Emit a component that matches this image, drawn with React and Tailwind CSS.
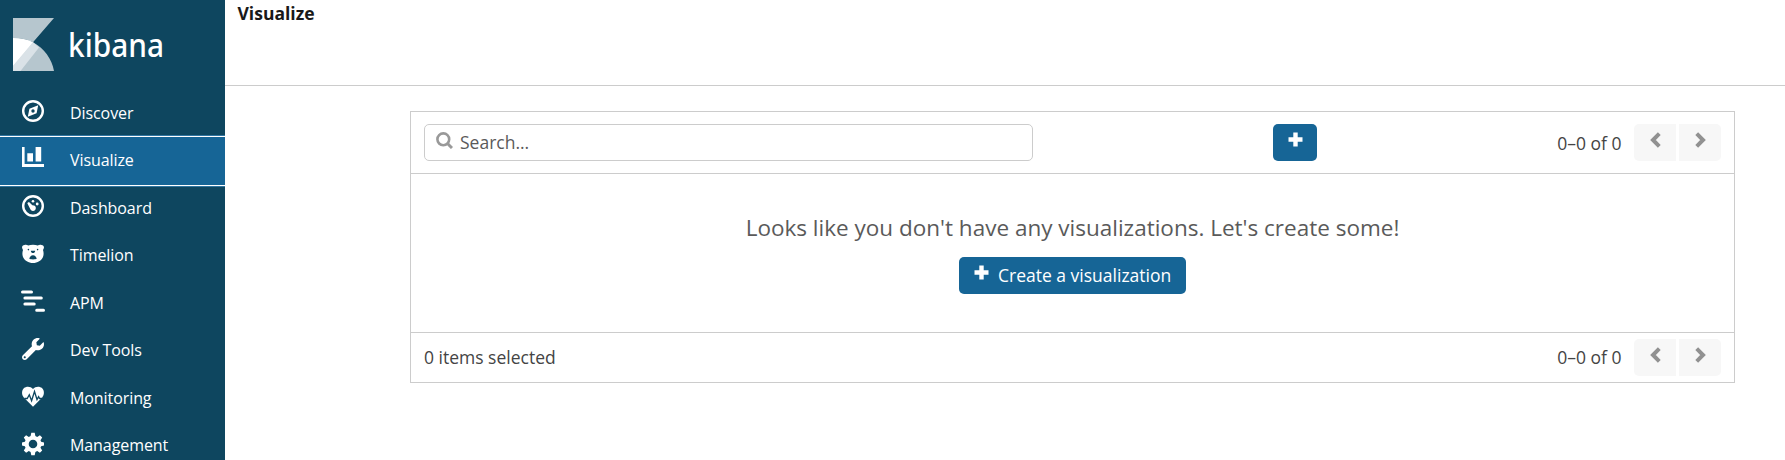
import React from 'react';
import { FaWrench } from 'react-icons/fa';

const DARK = '#0e465f';

function KibanaMark() {
  return (
    <svg className="block h-[53px] w-[41px]" viewBox="0 0 41 53">
      <path d="M0 0H41L20 24.2C14 21 7 20 0 20Z" fill="#b6c6ce" />
      <path d="M20 24.2C31 30 39 41 41 53H0V20C7 20 14 21 20 24.2Z" fill="#b6c6ce" />
      <path d="M20 24.2L26 29.6L7.5 53H0V48Z" fill="#dae2e7" />
      <path d="M0 20C7 20 14 21 20 24.2L0 48Z" fill="#fff" />
    </svg>
  );
}

function Icon({ children }) {
  return (
    <svg className="block h-6 w-6 shrink-0" viewBox="0 0 24 24" fill="#fff">
      {children}
    </svg>
  );
}

function DiscoverIcon() {
  return (
    <Icon>
      <circle cx="12" cy="12" r="9.8" fill="none" stroke="#fff" strokeWidth="2.4" />
      <path fillRule="evenodd" d="M17.2 6.3L15.6 14.2L6.8 17.7L8.4 9.8ZM12 10.3A1.7 1.7 0 1 0 12 13.7A1.7 1.7 0 1 0 12 10.3Z" />
    </Icon>
  );
}

function VisualizeIcon() {
  return (
    <Icon>
      <path d="M1 1H3.6V18H23V21H1ZM6.3 7.2H12V15.6H6.3ZM14.6 1H20.2V15.6H14.6Z" />
    </Icon>
  );
}

function DashboardIcon() {
  return (
    <Icon>
      <circle cx="12" cy="12" r="9.8" fill="none" stroke="#fff" strokeWidth="2.4" />
      <circle cx="12" cy="7.2" r="1.3" />
      <circle cx="16.2" cy="10" r="1.4" />
      <path d="M6.4 9.6C6.6 8.4 7.8 8 8.8 8.7L11.3 11.2C12.8 11 14.6 11.7 14.8 13.6C15 15.6 13.8 17 12 17C10.5 17 9.6 15.8 9 14.5Z" />
    </Icon>
  );
}

function TimelionIcon() {
  return (
    <Icon>
      <path d="M3.5 3C5 2.5 6.3 3 7.2 3.6C10 2.3 14 2.3 16.8 3.6C17.7 3 19 2.5 20.5 3C22.5 3 23.3 4.6 22.8 6.2C22.5 7 22.2 7.5 22 8C22.8 10 22.8 13 22 15C20.5 18.5 16.5 21 12 21C7.5 21 3.5 18.5 2 15C1.2 13 1.2 10 2 8C1.8 7.5 1.5 7 1.2 6.2C0.7 4.6 1.5 3 3.5 3Z" />
      <g fill={DARK}>
        <circle cx="7.4" cy="7.6" r="0.8" />
        <circle cx="16.6" cy="7.6" r="0.8" />
        <path d="M9.8 8.7H14.2C14.2 10.2 13 11 12 11C11 11 9.8 10.2 9.8 8.7Z" />
        <path d="M12 13.2C14 13.2 15.7 15.3 15.7 16.8C14.5 17.6 9.5 17.6 8.3 16.8C8.3 15.3 10 13.2 12 13.2Z" />
      </g>
    </Icon>
  );
}

function ApmIcon() {
  return (
    <Icon>
      <g stroke="#fff" strokeWidth="3" strokeLinecap="round">
        <path d="M1.5 3H10.5M3.9 9H20.3M3.9 15H13.2M15.7 21.2H22.5" />
      </g>
    </Icon>
  );
}

function WrenchIcon() {
  return (
    <span className="flex h-6 w-6 shrink-0 items-center justify-center text-white">
      <FaWrench className="h-[22px] w-[22px]" />
    </span>
  );
}

function MonitoringIcon() {
  return (
    <Icon>
      <path d="M12 22.8L2.8 13.5C0.5 10.8 0.5 6.5 2.8 4.3C5.5 2 9.5 2.3 12 5C14.5 2.3 18.5 2 21.2 4.3C23.5 6.5 23.5 10.8 21.2 13.5Z" />
      <path d="M3.5 14.5H6.2L8.3 10.8L10.6 16.8L13.5 7.5L16 15.5L17.6 12.6L18.6 14.5H21" fill="none" stroke={DARK} strokeWidth="1.3" />
    </Icon>
  );
}

function ManagementIcon() {
  return (
    <Icon>
      <path
        fillRule="evenodd"
        d="M10.3 0.7H13.7L14.4 4.1L16.2 4.9L18.9 3.2L21.2 5.5L19.5 8.2L20.1 9.7L23 10.4V13.6L20.1 14.3L19.5 15.8L21.2 18.5L18.9 20.8L16.2 19.1L14.4 19.9L13.7 23.3H10.3L9.6 19.9L7.8 19.1L5.1 20.8L2.8 18.5L4.5 15.8L3.9 14.3L1 13.6V10.4L3.9 9.7L4.5 8.2L2.8 5.5L5.1 3.2L7.8 4.9L9.6 4.1ZM12 7.7A4.3 4.3 0 1 0 12 16.3A4.3 4.3 0 1 0 12 7.7Z"
      />
    </Icon>
  );
}

const items = [
  { label: 'Discover', Glyph: DiscoverIcon },
  { label: 'Visualize', Glyph: VisualizeIcon, active: true },
  { label: 'Dashboard', Glyph: DashboardIcon },
  { label: 'Timelion', Glyph: TimelionIcon },
  { label: 'APM', Glyph: ApmIcon },
  { label: 'Dev Tools', Glyph: WrenchIcon },
  { label: 'Monitoring', Glyph: MonitoringIcon },
  { label: 'Management', Glyph: ManagementIcon },
];

function Sidebar() {
  return (
    <aside className="h-full w-[225px] shrink-0 overflow-hidden bg-[#0e465f] text-white">
      <div className="flex h-[89.5px] items-start pt-[18px] pl-[13px]">
        <KibanaMark />
        <svg className="ml-[14px] block h-[53px] w-[140px]" viewBox="0 0 140 53">
          <text x="0" y="38.5" fill="#fff" fontFamily="Noto Sans, sans-serif" fontSize="32" fontWeight="500" textLength="96" lengthAdjust="spacingAndGlyphs">
            kibana
          </text>
        </svg>
      </div>
      <nav>
        {items.map(({ label, Glyph, active }) => (
          <a
            key={label}
            className={
              active
                ? '-my-[2.25px] flex h-[52px] items-center border-y border-[#2f75a1] bg-[#166596] pl-[21px] shadow-[inset_0_1px_0_#fff,inset_0_-1px_0_#fff]'
                : 'flex h-[47.5px] items-center pl-[21px]'
            }
          >
            <span className={active ? '-mt-[6px]' : '-mt-[4px]'}>
              <Glyph />
            </span>
            <span className="-mt-[1px] ml-[25px] text-[16px] leading-6 tracking-[-0.08px]">{label}</span>
          </a>
        ))}
      </nav>
    </aside>
  );
}

function PlusIcon() {
  return (
    <svg className="block h-[15px] w-[15px]" viewBox="0 0 15 15" fill="#fff">
      <path d="M5.3 0.5H9.7V5.3H14.5V9.7H9.7V14.5H5.3V9.7H0.5V5.3H5.3Z" />
    </svg>
  );
}

function Chevron({ right }) {
  return (
    <svg className="block h-4 w-[11px]" viewBox="0 0 11 16" fill="none" stroke="#919191" strokeWidth="4">
      <path d={right ? 'M1.7 1.7L8 8L1.7 14.3' : 'M9.3 1.7L3 8L9.3 14.3'} />
    </svg>
  );
}

function Pager({ labelClass }) {
  return (
    <div className="flex items-center">
      <span className={`mr-[12.5px] leading-6 ${labelClass}`}>0–0 of 0</span>
      <button className="flex h-[37px] w-[42px] justify-center rounded-l-[5px] bg-[#f7f7f7] pt-2">
        <Chevron />
      </button>
      <button className="ml-[3px] flex h-[37px] w-[42px] justify-center rounded-r-[5px] bg-[#f7f7f7] pt-2">
        <Chevron right />
      </button>
    </div>
  );
}

export default function App() {
  return (
    <div className="flex h-[460px] w-full overflow-hidden bg-white font-['Open_Sans',sans-serif] text-[17.5px] text-[#444]">
      <Sidebar />
      <main className="min-w-0 flex-1">
        <header className="h-[86px] border-b border-[#ccc] pt-[1px] pl-[12.5px] text-[17.5px] leading-6 font-bold text-[#191919]">Visualize</header>
        <section className="mt-[25px] ml-[185px] w-[1325px] border border-[#ccc]">
          <div className="flex h-[62px] items-center border-b border-[#ccc] px-[13px]">
            <div className="flex h-[37px] w-[609px] items-start rounded-[5px] border border-[#ccc] pl-[11px] text-[#5a5a5a]">
              <svg className="mt-[7px] block h-[17px] w-[17px]" viewBox="0 0 17 17" fill="none" stroke="#999">
                <circle cx="7.3" cy="7.3" r="5.9" strokeWidth="2.6" />
                <path d="M11.5 11.5L16 16" strokeWidth="3" />
              </svg>
              <span className="ml-[7px] pt-[5px] leading-6">Search...</span>
            </div>
            <button className="ml-[240px] flex h-[37px] w-[44px] justify-center rounded-[5px] bg-[#166596] pt-2">
              <PlusIcon />
            </button>
            <div className="ml-auto">
              <Pager labelClass="mt-0" />
            </div>
          </div>
          <div className="flex h-[159px] flex-col items-center border-b border-[#ccc] pt-[38px]">
            <p className="text-[22.5px] leading-8 text-[#5a5a5a]">Looks like you don't have any visualizations. Let's create some!</p>
            <button className="mt-[13px] flex h-[37px] w-[227px] items-start rounded-[5px] bg-[#166596] pt-2 pl-[15px] text-white">
              <PlusIcon />
              <span className="-mt-[2px] ml-[9px] leading-6 whitespace-nowrap">Create a visualization</span>
            </button>
          </div>
          <div className="flex h-[49px] items-center justify-between px-[13px]">
            <span className="-mt-[2px] leading-6">0 items selected</span>
            <Pager labelClass="-mt-px" />
          </div>
        </section>
      </main>
    </div>
  );
}
